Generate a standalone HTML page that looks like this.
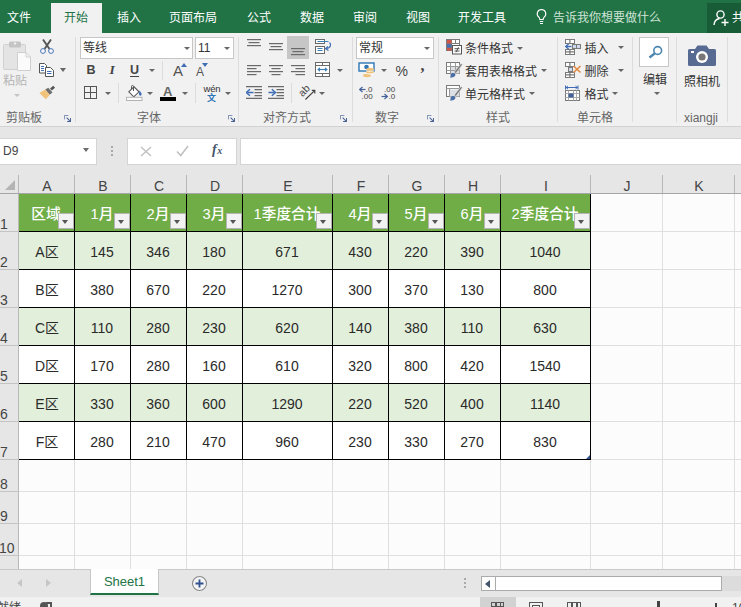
<!DOCTYPE html>
<html lang="zh-CN"><head><meta charset="utf-8"><title>Excel</title>
<style>
html,body{margin:0;padding:0;}
body{width:741px;height:607px;overflow:hidden;position:relative;background:#fff;font-family:"Liberation Sans","Noto Sans CJK SC",sans-serif;font-size:12px;color:#444;}
.abs,.abs *{position:absolute;}
div{box-sizing:border-box;}
#top{left:0;top:0;width:741px;height:33px;background:#217346;}
.tab{top:0;height:32px;line-height:36px;color:#fff;font-size:12px;white-space:nowrap;text-align:center;}
#ribbon{left:0;top:33px;width:741px;height:94px;background:#f1f1f1;border-bottom:1px solid #d2d2d2;}
.gl{top:77px;height:14px;line-height:14px;font-size:12px;color:#666;text-align:center;white-space:nowrap;}

.rt{font-size:12px;color:#333;white-space:nowrap;line-height:14px;}
#fbar{left:0;top:127px;width:741px;height:43px;background:#e6e6e6;}
#grid{left:0;top:170px;width:741px;height:399px;background:#fcfcfc;overflow:hidden;}
.ch{top:0;height:24px;line-height:32px;text-align:center;font-size:14px;color:#444;background:#e6e6e6;}
.rh{left:0;width:16px;text-align:left;font-size:14px;color:#444;background:#e6e6e6;}
.vl{top:24px;width:1px;height:375px;background:#dfdfdf;}
.hl{left:19px;height:1px;width:722px;background:#dfdfdf;}
.c{text-align:center;font-size:14px;color:#2a2a2a;white-space:nowrap;overflow:hidden;}
.hc{background:#70ad47;color:#fff;font-weight:500;font-size:14.670px;}
.band{background:#e2efda;}
.bl{background:#000;}
.fb{width:16px;height:16px;background:#f2f2f2;border:1px solid #b4b4b4;}
.fb i{left:3px;top:6px;width:0;height:0;border-left:3.5px solid transparent;border-right:3.5px solid transparent;border-top:4px solid #555;}
#tabs{left:0;top:569px;width:741px;height:28px;background:#e6e6e6;border-top:1px solid #c8c8c8;}
#status{left:0;top:597px;width:741px;height:10px;background:#f1f1f1;overflow:hidden;}
</style></head><body>
<div id="top" class="abs">
<div style="left:51px;top:3px;width:51px;height:30px;background:#f1f1f1;"></div>
<div class="tab" style="left:-3px;width:44px;color:#fff;">文件</div>
<div class="tab" style="left:54px;width:44px;color:#217346;">开始</div>
<div class="tab" style="left:107px;width:44px;color:#fff;">插入</div>
<div class="tab" style="left:159px;width:68px;color:#fff;">页面布局</div>
<div class="tab" style="left:237px;width:44px;color:#fff;">公式</div>
<div class="tab" style="left:290px;width:44px;color:#fff;">数据</div>
<div class="tab" style="left:343px;width:44px;color:#fff;">审阅</div>
<div class="tab" style="left:396px;width:44px;color:#fff;">视图</div>
<div class="tab" style="left:448px;width:68px;color:#fff;">开发工具</div>
<svg style="left:535px;top:8px;" width="13" height="18" viewBox="0 0 13 18"><path d="M6.5 1.5a4.3 4.3 0 0 0-2.6 7.7c.6.6.9 1.300.9 2.300h3.400c0-1 .3-1.700.9-2.300A4.300 4.300 0 0 0 6.500 1.500z" fill="none" stroke="#fff" stroke-width="1.100"/><path d="M4.800 13.500h3.400M5 15.500h3" stroke="#fff" stroke-width="1.100" fill="none"/></svg>
<div class="tab" style="left:553px;width:108px;color:#cfe3d6;text-align:left;">告诉我你想要做什么</div>
<div style="left:707px;top:3px;width:34px;height:30px;background:#185c37;"></div>
<svg style="left:712px;top:9px;" width="18" height="18" viewBox="0 0 18 18"><circle cx="8.500" cy="5.500" r="3.600" fill="none" stroke="#fff" stroke-width="1.400"/><path d="M2 16c.3-3.500 2.300-6 5.500-6.500" fill="none" stroke="#fff" stroke-width="1.400"/><path d="M13 10v7M9.500 13.500h7" stroke="#fff" stroke-width="1.400"/></svg>
<div class="tab" style="left:732px;width:24px;text-align:left;font-size:12.5px;">共享</div>
</div>
<div id="ribbon" class="abs"><svg style="left:3px;top:8px;" width="29" height="31" viewBox="0 0 29 31"><rect x="0.500" y="3.500" width="22" height="25" rx="1" fill="#e4e4e4" stroke="#d0d0d0"/><rect x="6" y="0.500" width="12" height="6" rx="1.500" fill="#c4c4c4"/><circle cx="12" cy="2.500" r="1.200" fill="#efefef"/><path d="M14.500 11.500h8.500l4.500 4.500v13.500h-13z" fill="#fbfbfb" stroke="#cfcfcf"/><path d="M23 11.500v4.500h4.500" fill="none" stroke="#cfcfcf"/></svg>
<div class="rt" style="left:3px;top:40.5px;color:#b4b4b4;font-size:12px;">粘贴</div>
<div style="left:13.5px;top:60.75px;width:0;height:0;border-left:3px solid transparent;border-right:3px solid transparent;border-top:3.5px solid #c4c4c4;"></div>
<svg style="left:40px;top:6px;" width="14" height="15" viewBox="0 0 14 15"><path d="M3 0.500L9.500 10M11 0.500L4.500 10" stroke="#555" stroke-width="1.900" fill="none"/><circle cx="3" cy="12" r="2.400" fill="#f8f8f8" stroke="#4a74b8" stroke-width="1"/><circle cx="11" cy="12" r="2.400" fill="#f8f8f8" stroke="#4a74b8" stroke-width="1"/></svg>
<svg style="left:39px;top:30px;" width="15" height="14" viewBox="0 0 15 14"><path d="M0.500 0.500h5l2 2v7.500h-7z" fill="#fff" stroke="#555"/><path d="M6.500 4.500h5l3 3v6h-8z" fill="#fff" stroke="#555"/><path d="M2 3.500h3M2 5.500h3M2 7.500h3M8 8.500h4.500M8 10.500h4.500" stroke="#3e6db5" stroke-width="1"/></svg>
<div style="left:60.0px;top:35.0px;width:0;height:0;border-left:3.5px solid transparent;border-right:3.5px solid transparent;border-top:4px solid #666;"></div>
<svg style="left:39px;top:52px;" width="17" height="15" viewBox="0 0 17 15"><path d="M11 3.500L14.300 0.800 16 2.800 12.800 5.500z" fill="#555"/><path d="M6.200 4.500L9.300 2.700 13.500 7.500 10.700 9.800z" fill="#6e6e6e"/><path d="M0.400 8.100L6.200 4.400 10.700 9.900 6.800 14.300z" fill="#f0c27a"/></svg>
<div class="gl" style="left:-1.0px;width:50px;top:77.5px;">剪贴板</div>
<svg style="left:64px;top:82px;" width="7" height="7" viewBox="0 0 8 8"><path d="M0.500 5V0.500H5" fill="none" stroke="#6a7fa8" stroke-width="1"/><path d="M3 3l4 4M7.500 3.500V7.500H3.500" fill="none" stroke="#4a6496" stroke-width="1.200"/></svg>
<div style="left:75px;top:4px;width:1px;height:85px;background:#dcdcdc;"></div>
<div style="left:80px;top:4px;width:113px;height:22px;background:#fff;border:1px solid #c6c6c6;"></div>
<div class="rt" style="left:83px;top:8px;color:#333;font-size:12px;">等线</div>
<div style="left:183.5px;top:13.75px;width:0;height:0;border-left:3px solid transparent;border-right:3px solid transparent;border-top:3.5px solid #666;"></div>
<div style="left:195px;top:4px;width:39px;height:22px;background:#fff;border:1px solid #c6c6c6;"></div>
<div class="rt" style="left:198px;top:8px;color:#333;font-size:12px;">11</div>
<div style="left:223.5px;top:13.75px;width:0;height:0;border-left:3px solid transparent;border-right:3px solid transparent;border-top:3.5px solid #666;"></div>
<div class="rt" style="left:86.5px;top:30px;color:#444;font-size:13px;font-weight:bold;font-size:12.500px;">B</div>
<div class="rt" style="left:109.5px;top:30px;color:#444;font-size:13px;font-family:'Liberation Serif',serif;font-weight:bold;font-style:italic;font-size:13.500px;">I</div>
<div class="rt" style="left:130px;top:30px;color:#444;font-size:13px;font-weight:bold;font-size:12.500px;">U</div>
<div style="left:130px;top:43px;width:9px;height:1px;background:#444;"></div>
<div style="left:148.5px;top:35.75px;width:0;height:0;border-left:3px solid transparent;border-right:3px solid transparent;border-top:3.5px solid #666;"></div>
<div style="left:162px;top:28px;width:1px;height:19px;background:#dcdcdc;"></div>
<div class="rt" style="left:173px;top:31px;color:#555;font-size:15px;">A</div>
<svg style="left:181px;top:30px;" width="6" height="4" viewBox="0 0 6 4"><path d="M3 0L6 4H0z" fill="#3e6db5"/></svg>
<div class="rt" style="left:196px;top:32px;color:#555;font-size:12px;">A</div>
<svg style="left:202px;top:30px;" width="6" height="4" viewBox="0 0 6 4"><path d="M0 0h6L3 4z" fill="#3e6db5"/></svg>
<svg style="left:84px;top:53px;" width="13" height="13" viewBox="0 0 13 13"><rect x="0.500" y="0.500" width="12" height="12" fill="none" stroke="#555"/><path d="M6.500 0.500v12M0.500 6.500h12" stroke="#555" fill="none"/></svg>
<div style="left:104.5px;top:58.75px;width:0;height:0;border-left:3px solid transparent;border-right:3px solid transparent;border-top:3.5px solid #666;"></div>
<div style="left:118px;top:50px;width:1px;height:20px;background:#dcdcdc;"></div>
<svg style="left:126px;top:52px;" width="17" height="16" viewBox="0 0 17 16"><path d="M2.800 6.800L8 1.800l5 5-5.200 5z" fill="#fff" stroke="#555" stroke-width="1.100"/><path d="M7.500 6V1.500a1 1 0 0 0-2 0V4" fill="none" stroke="#555" stroke-width="1"/><path d="M13.300 5.500c1.800 1.800 3 3.600 2 4.800-.8.900-2.300.400-2.300-1 0-1.200.500-2.400.300-3.800z" fill="#3e6db5"/><rect x="0.500" y="12.300" width="15.500" height="3.200" fill="#fafafa" stroke="#b4b4b4"/></svg>
<div style="left:147px;top:58.75px;width:0;height:0;border-left:3px solid transparent;border-right:3px solid transparent;border-top:3.5px solid #666;"></div>
<div class="rt" style="left:163px;top:51.5px;color:#666;font-size:13px;font-weight:bold;font-size:13px;">A</div>
<div style="left:160px;top:64px;width:16px;height:4px;background:#000;"></div>
<div style="left:181.5px;top:58.75px;width:0;height:0;border-left:3px solid transparent;border-right:3px solid transparent;border-top:3.5px solid #666;"></div>
<div style="left:195px;top:50px;width:1px;height:20px;background:#dcdcdc;"></div>
<div class="rt" style="left:203.5px;top:49px;color:#333;font-size:9px;font-size:9.500px;letter-spacing:-0.200px;">wén</div>
<div class="rt" style="left:207px;top:58px;color:#2e75b6;font-size:9px;font-size:9px;font-weight:bold;">文</div>
<div style="left:224.5px;top:58.75px;width:0;height:0;border-left:3px solid transparent;border-right:3px solid transparent;border-top:3.5px solid #666;"></div>
<div class="gl" style="left:124.0px;width:50px;top:77.5px;">字体</div>
<svg style="left:228px;top:82px;" width="7" height="7" viewBox="0 0 8 8"><path d="M0.500 5V0.500H5" fill="none" stroke="#6a7fa8" stroke-width="1"/><path d="M3 3l4 4M7.500 3.500V7.500H3.500" fill="none" stroke="#4a6496" stroke-width="1.200"/></svg>
<div style="left:238px;top:4px;width:1px;height:85px;background:#dcdcdc;"></div>
<svg style="left:247px;top:6px;" width="14" height="8" viewBox="0 0 14 8"><rect x="0" y="0" width="14" height="1.200" fill="#6a6a6a"/><rect x="1.5" y="3" width="11.0" height="1.200" fill="#6a6a6a"/><rect x="0" y="6" width="14" height="1.200" fill="#6a6a6a"/></svg>
<svg style="left:269px;top:10px;" width="14" height="8" viewBox="0 0 14 8"><rect x="0" y="0" width="14" height="1.200" fill="#6a6a6a"/><rect x="1.5" y="3" width="11.0" height="1.200" fill="#6a6a6a"/><rect x="0" y="6" width="14" height="1.200" fill="#6a6a6a"/></svg>
<div style="left:287px;top:3px;width:22px;height:23px;background:#c6c6c6;"></div>
<svg style="left:291px;top:15px;" width="14" height="8" viewBox="0 0 14 8"><rect x="0" y="0" width="14" height="1.200" fill="#6a6a6a"/><rect x="1.5" y="3" width="11.0" height="1.200" fill="#6a6a6a"/><rect x="0" y="6" width="14" height="1.200" fill="#6a6a6a"/></svg>
<svg style="left:315px;top:6px;" width="17" height="15" viewBox="0 0 17 15"><rect x="0.500" y="0.500" width="9" height="4" fill="#fff" stroke="#6a6a6a"/><rect x="0.500" y="7.500" width="9" height="7" fill="#fff" stroke="#6a6a6a"/><path d="M2.500 2.500h11" stroke="#3e7fb5" stroke-width="1"/><path d="M2.500 9.500h5M2.500 11.500h5" stroke="#3e7fb5" stroke-width="1"/><path d="M14.500 3.500c1.800 1.500 1.500 5.500-3 6" fill="none" stroke="#3e6db5" stroke-width="1.200"/><path d="M13 7.500L10.500 9.700 13.500 11.500" fill="none" stroke="#3e6db5" stroke-width="1.200"/></svg>
<svg style="left:247px;top:32px;" width="14" height="11" viewBox="0 0 14 11"><rect x="0" y="0" width="14" height="1.200" fill="#6a6a6a"/><rect x="0" y="3" width="9.5" height="1.200" fill="#6a6a6a"/><rect x="0" y="6" width="14" height="1.200" fill="#6a6a6a"/><rect x="0" y="9" width="9.5" height="1.200" fill="#6a6a6a"/></svg>
<svg style="left:269px;top:32px;" width="14" height="11" viewBox="0 0 14 11"><rect x="0" y="0" width="14" height="1.200" fill="#6a6a6a"/><rect x="2.5" y="3" width="9.0" height="1.200" fill="#6a6a6a"/><rect x="0" y="6" width="14" height="1.200" fill="#6a6a6a"/><rect x="2.5" y="9" width="9.0" height="1.200" fill="#6a6a6a"/></svg>
<svg style="left:291px;top:32px;" width="14" height="11" viewBox="0 0 14 11"><rect x="0" y="0" width="14" height="1.200" fill="#6a6a6a"/><rect x="4.5" y="3" width="9.5" height="1.200" fill="#6a6a6a"/><rect x="0" y="6" width="14" height="1.200" fill="#6a6a6a"/><rect x="4.5" y="9" width="9.5" height="1.200" fill="#6a6a6a"/></svg>
<svg style="left:315px;top:29px;" width="15" height="15" viewBox="0 0 15 15"><rect x="0.500" y="0.500" width="14" height="14" fill="#fff" stroke="#6a6a6a"/><path d="M0.500 3.500h14M0.500 11.500h14M7.500 0.500v3M7.500 11.500v3" stroke="#6a6a6a" fill="none"/><path d="M3 7.500h9" stroke="#3e7fb5" stroke-width="1.200"/><path d="M5 5.300L2.200 7.500 5 9.700zM10 5.300l2.800 2.200L10 9.700z" fill="#3e7fb5"/></svg>
<div style="left:336.5px;top:35.75px;width:0;height:0;border-left:3px solid transparent;border-right:3px solid transparent;border-top:3.5px solid #666;"></div>
<svg style="left:246px;top:53px;" width="16" height="13" viewBox="0 0 16 13"><path d="M0 0.600h16M8.500 3.600h7.500M8.500 6.600h7.500M8.500 9.600h7.500M0 12.400h16" stroke="#6a6a6a" stroke-width="1.200"/><path d="M7.500 6.500h-6" stroke="#3e6db5" stroke-width="1.500"/><path d="M4 3.300L0.300 6.500 4 9.700" fill="none" stroke="#3e6db5" stroke-width="1.500"/></svg>
<svg style="left:268px;top:53px;" width="16" height="13" viewBox="0 0 16 13"><path d="M0 0.600h16M8.500 3.600h7.500M8.500 6.600h7.500M8.500 9.600h7.500M0 12.400h16" stroke="#6a6a6a" stroke-width="1.200"/><path d="M0.500 6.500h6" stroke="#3e6db5" stroke-width="1.500"/><path d="M3.800 3.300L7.500 6.500 3.800 9.700" fill="none" stroke="#3e6db5" stroke-width="1.500"/></svg>
<div style="left:291px;top:50px;width:1px;height:20px;background:#dcdcdc;"></div>
<svg style="left:298px;top:51px;" width="18" height="17" viewBox="0 0 18 17"><text x="0" y="0" font-size="10.500" fill="#4a4a4a" font-family="Liberation Sans, sans-serif" transform="translate(4.400 13.200) rotate(-45)">ab</text><path d="M7.400 15.500L16.600 6.600" stroke="#444" stroke-width="1.200"/><path d="M13.800 6.400h3v3" fill="none" stroke="#444" stroke-width="1.200"/></svg>
<div style="left:318.5px;top:58.75px;width:0;height:0;border-left:3px solid transparent;border-right:3px solid transparent;border-top:3.5px solid #666;"></div>
<div class="gl" style="left:257.0px;width:60px;top:77.5px;">对齐方式</div>
<svg style="left:340px;top:82px;" width="7" height="7" viewBox="0 0 8 8"><path d="M0.500 5V0.500H5" fill="none" stroke="#6a7fa8" stroke-width="1"/><path d="M3 3l4 4M7.500 3.500V7.500H3.500" fill="none" stroke="#4a6496" stroke-width="1.200"/></svg>
<div style="left:352px;top:4px;width:1px;height:85px;background:#dcdcdc;"></div>
<div style="left:356px;top:4px;width:78px;height:22px;background:#fff;border:1px solid #c6c6c6;"></div>
<div class="rt" style="left:359px;top:8px;color:#333;font-size:12px;">常规</div>
<div style="left:423.5px;top:13.75px;width:0;height:0;border-left:3px solid transparent;border-right:3px solid transparent;border-top:3.5px solid #666;"></div>
<svg style="left:358px;top:29px;" width="18" height="16" viewBox="0 0 18 16"><rect x="1" y="1" width="15" height="8" fill="#fff" stroke="#2e75b6" stroke-width="1.400"/><circle cx="8.500" cy="5" r="2.300" fill="#2e75b6"/><ellipse cx="12" cy="7.300" rx="4" ry="1.600" fill="#f0c27a"/><ellipse cx="12" cy="10" rx="4" ry="1.600" fill="#f0c27a"/><ellipse cx="9" cy="13.500" rx="4" ry="1.700" fill="#f0c27a"/><path d="M8 8.600c1.500 1 6 1 8 0M8 11.300c1.500 1 6 1 8 0" stroke="#fff" stroke-width="0.700" fill="none"/></svg>
<div style="left:380.5px;top:35.75px;width:0;height:0;border-left:3px solid transparent;border-right:3px solid transparent;border-top:3.5px solid #666;"></div>
<div class="rt" style="left:395.5px;top:30.5px;color:#444;font-size:14px;font-size:14px;">%</div>
<div class="rt" style="left:420.5px;top:26px;color:#444;font-size:17px;font-weight:bold;font-size:16px;font-family:'Liberation Serif',serif;">,</div>
<svg style="left:359px;top:53px;" width="16" height="14" viewBox="0 0 16 14"><text x="6.800" y="6" font-size="8" fill="#444" font-family="Liberation Sans, sans-serif">.0</text><text x="2.500" y="13.300" font-size="8" fill="#444" font-family="Liberation Sans, sans-serif">.00</text><path d="M6.500 3.500h-5.500" stroke="#44619a" stroke-width="1.200"/><path d="M3.500 1L0.600 3.500 3.500 6" fill="none" stroke="#44619a" stroke-width="1.200"/></svg>
<svg style="left:381px;top:53px;" width="16" height="14" viewBox="0 0 16 14"><text x="3" y="6" font-size="8" fill="#444" font-family="Liberation Sans, sans-serif">.00</text><text x="7.500" y="13.300" font-size="8" fill="#444" font-family="Liberation Sans, sans-serif">.0</text><path d="M0.500 10.500h5.500" stroke="#44619a" stroke-width="1.200"/><path d="M3.500 8L6.400 10.500 3.500 13" fill="none" stroke="#44619a" stroke-width="1.200"/></svg>
<div class="gl" style="left:362.0px;width:50px;top:77.5px;">数字</div>
<svg style="left:427px;top:82px;" width="7" height="7" viewBox="0 0 8 8"><path d="M0.500 5V0.500H5" fill="none" stroke="#6a7fa8" stroke-width="1"/><path d="M3 3l4 4M7.500 3.500V7.500H3.500" fill="none" stroke="#4a6496" stroke-width="1.200"/></svg>
<div style="left:438px;top:4px;width:1px;height:85px;background:#dcdcdc;"></div>
<svg style="left:446px;top:6px;" width="17" height="16" viewBox="0 0 17 16"><rect x="0.500" y="0.500" width="13" height="11" fill="#fff" stroke="#7a7a7a"/><path d="M5.500 0.500v11M9.500 0.500v4M0.500 4.500h13M0.500 8.500h6" stroke="#7a7a7a" fill="none"/><rect x="1" y="1" width="4.500" height="3.500" fill="#d0544a"/><rect x="1" y="5" width="4.500" height="3.500" fill="#4a6fb0"/><rect x="1" y="9" width="4.500" height="2.500" fill="#d0544a"/><rect x="6.500" y="6.500" width="9" height="8.500" fill="#fff" stroke="#555"/><path d="M8.500 9.700h5M8.500 12h5M12.500 8.300l-2.500 5" stroke="#444" stroke-width="0.900" fill="none"/></svg>
<div class="rt" style="left:465px;top:9px;color:#333;font-size:12px;">条件格式</div>
<div style="left:516.5px;top:13.75px;width:0;height:0;border-left:3px solid transparent;border-right:3px solid transparent;border-top:3.5px solid #666;"></div>
<svg style="left:446px;top:29px;" width="17" height="16" viewBox="0 0 17 16"><rect x="0.500" y="0.500" width="13" height="11" fill="#fff" stroke="#7a7a7a"/><rect x="4.500" y="4.500" width="9" height="7" fill="#dcdfe4"/><path d="M0.500 4.500h13M0.500 8.500h13M4.500 0.500v11M9.500 0.500v11" stroke="#999" fill="none"/><path d="M16.500 2.500L10.500 10.500 8 12l.800-2.800L15 1.500z" fill="#777" stroke="#f1f1f1" stroke-width="0.600"/><path d="M4.500 12.500c1.300-2 4-2 4.800-.3.700 1.800-1.800 3.600-5.500 3.300 1-1 .900-2 .700-3z" fill="#4a6fa5"/></svg>
<div class="rt" style="left:465px;top:32px;color:#333;font-size:12px;">套用表格格式</div>
<div style="left:540.5px;top:35.75px;width:0;height:0;border-left:3px solid transparent;border-right:3px solid transparent;border-top:3.5px solid #666;"></div>
<svg style="left:446px;top:52px;" width="17" height="16" viewBox="0 0 17 16"><rect x="0.500" y="0.500" width="13" height="11" fill="#fff" stroke="#7a7a7a"/><rect x="3.500" y="4.500" width="10" height="7" fill="#dcdfe4"/><path d="M0.500 3.500h13M3.500 3.500v8" stroke="#999" fill="none"/><path d="M16.500 2.500L10.500 10.500 8 12l.800-2.800L15 1.500z" fill="#777" stroke="#f1f1f1" stroke-width="0.600"/><path d="M4.500 12.500c1.300-2 4-2 4.800-.3.700 1.800-1.800 3.600-5.500 3.300 1-1 .900-2 .700-3z" fill="#4a6fa5"/></svg>
<div class="rt" style="left:465px;top:55px;color:#333;font-size:12px;">单元格样式</div>
<div style="left:528.5px;top:58.75px;width:0;height:0;border-left:3px solid transparent;border-right:3px solid transparent;border-top:3.5px solid #666;"></div>
<div class="gl" style="left:473.0px;width:50px;top:77.5px;">样式</div>
<div style="left:557px;top:4px;width:1px;height:85px;background:#dcdcdc;"></div>
<svg style="left:565px;top:6px;" width="17" height="16" viewBox="0 0 17 16"><rect x="0.5" y="0.5" width="4.5" height="4" fill="#fff" stroke="#7a7a7a"/><rect x="5" y="0.5" width="4.5" height="4" fill="#fff" stroke="#7a7a7a"/><rect x="7.5" y="5.5" width="4" height="4" fill="#cfd8ea" stroke="#7a7a7a"/><rect x="11.5" y="5.5" width="4" height="4" fill="#cfd8ea" stroke="#7a7a7a"/><rect x="0.5" y="10.5" width="4.5" height="2.5" fill="#fff" stroke="#7a7a7a"/><rect x="5" y="10.5" width="4.5" height="2.5" fill="#fff" stroke="#7a7a7a"/><rect x="0.5" y="13" width="4.5" height="2.5" fill="#fff" stroke="#7a7a7a"/><rect x="5" y="13" width="4.5" height="2.5" fill="#fff" stroke="#7a7a7a"/><path d="M6.500 7.500H1" stroke="#3e6db5" stroke-width="1.400"/><path d="M3.600 5L0.700 7.500 3.600 10" fill="none" stroke="#3e6db5" stroke-width="1.400"/></svg>
<div class="rt" style="left:584.5px;top:9px;color:#333;font-size:12px;">插入</div>
<div style="left:617.5px;top:12.75px;width:0;height:0;border-left:3px solid transparent;border-right:3px solid transparent;border-top:3.5px solid #666;"></div>
<svg style="left:565px;top:29px;" width="17" height="16" viewBox="0 0 17 16"><rect x="0.5" y="0.5" width="4.5" height="4" fill="#fff" stroke="#7a7a7a"/><rect x="5" y="0.5" width="4.5" height="4" fill="#fff" stroke="#7a7a7a"/><rect x="3.5" y="5.5" width="4" height="4" fill="#cfd8ea" stroke="#7a7a7a"/><rect x="0.5" y="10.5" width="4.5" height="2.5" fill="#fff" stroke="#7a7a7a"/><rect x="5" y="10.5" width="4.5" height="2.5" fill="#fff" stroke="#7a7a7a"/><rect x="0.5" y="13" width="4.5" height="2.5" fill="#fff" stroke="#7a7a7a"/><rect x="5" y="13" width="4.5" height="2.5" fill="#fff" stroke="#7a7a7a"/><path d="M8.500 4l7 6.500M15.500 4l-7 6.500" stroke="#e0883e" stroke-width="1.600"/></svg>
<div class="rt" style="left:584.5px;top:32px;color:#333;font-size:12px;">删除</div>
<div style="left:617.5px;top:35.75px;width:0;height:0;border-left:3px solid transparent;border-right:3px solid transparent;border-top:3.5px solid #666;"></div>
<svg style="left:565px;top:52px;" width="16" height="16" viewBox="0 0 16 16"><path d="M1 2.500h11.500" stroke="#3e6db5" stroke-width="1"/><path d="M0.500 0.500v4M13 0.500v4" stroke="#3e6db5"/><path d="M3 1L1 2.500 3 4M10.500 1l2 1.500-2 1.500" fill="none" stroke="#3e6db5" stroke-width="0.900"/><rect x="0.500" y="5.500" width="14" height="10" fill="#fff" stroke="#7a7a7a"/><path d="M0.500 8.500h14M0.500 12.500h14M3.500 5.500v10M8.500 5.500v10M11.500 5.500v10" stroke="#aaa" fill="none"/><rect x="3.500" y="8.500" width="5" height="4" fill="#44619a"/></svg>
<div class="rt" style="left:584.5px;top:55px;color:#333;font-size:12px;">格式</div>
<div style="left:611.5px;top:58.75px;width:0;height:0;border-left:3px solid transparent;border-right:3px solid transparent;border-top:3.5px solid #666;"></div>
<div class="gl" style="left:570.0px;width:50px;top:77.5px;">单元格</div>
<div style="left:632px;top:4px;width:1px;height:85px;background:#dcdcdc;"></div>
<div style="left:639px;top:4px;width:30px;height:30px;background:#fff;border:1px solid #c6c6c6;"></div>
<svg style="left:648px;top:12px;" width="15" height="14" viewBox="0 0 15 14"><circle cx="9.700" cy="5.500" r="3.900" fill="none" stroke="#4a86b0" stroke-width="1.600"/><path d="M6.800 8.400L1.500 12.500" stroke="#4a86b0" stroke-width="2.400"/></svg>
<div class="rt" style="left:643px;top:39.5px;color:#333;font-size:12px;">编辑</div>
<div style="left:653.5px;top:59.25px;width:0;height:0;border-left:3px solid transparent;border-right:3px solid transparent;border-top:3.5px solid #666;"></div>
<div style="left:676px;top:4px;width:1px;height:85px;background:#dcdcdc;"></div>
<svg style="left:688px;top:10.5px;" width="28" height="23" viewBox="0 0 28 23"><path d="M1.500 5h5.500l2.500-3.500h9l2.500 3.500h5.500a1.500 1.500 0 0 1 1.500 1.500v14a1.500 1.500 0 0 1-1.500 1.500h-25a1.500 1.500 0 0 1-1.500-1.500v-14a1.500 1.500 0 0 1 1.500-1.500z" fill="#566a92"/><circle cx="14" cy="13" r="6" fill="#fff"/><circle cx="14" cy="13" r="3.600" fill="#777"/><rect x="3" y="7" width="3" height="2" fill="#fff"/></svg>
<div class="rt" style="left:684px;top:41.5px;color:#333;font-size:12px;">照相机</div>
<div class="gl" style="left:671px;width:60px;top:77.5px;">xiangji</div>
<div style="left:727px;top:4px;width:1px;height:85px;background:#dcdcdc;"></div></div>
<div id="fbar" class="abs">
<div style="left:0;top:11px;width:97px;height:27px;background:#fff;border:1px solid #d4d4d4;border-left:none;"></div>
<div style="left:3px;top:17px;font-size:12px;color:#444;line-height:14px;">D9</div>
<div style="left:83px;top:21px;width:0;height:0;border-left:3.500px solid transparent;border-right:3.500px solid transparent;border-top:4px solid #6a6a6a;"></div>
<div style="left:111px;top:19px;width:2px;height:2px;background:#a8a8a8;"></div><div style="left:111px;top:23px;width:2px;height:2px;background:#a8a8a8;"></div><div style="left:111px;top:27px;width:2px;height:2px;background:#a8a8a8;"></div>
<div style="left:127px;top:11px;width:110px;height:27px;background:#fff;border:1px solid #d4d4d4;"></div>
<svg style="left:140px;top:19px;" width="12" height="11" viewBox="0 0 12 11"><path d="M1 1l10 9M11 1L1 10" stroke="#c0c0c0" stroke-width="1.400" fill="none"/></svg>
<svg style="left:176px;top:18px;" width="13" height="12" viewBox="0 0 13 12"><path d="M1 6.500l3.800 4L12 1" stroke="#c0c0c0" stroke-width="1.600" fill="none"/></svg>
<div style="left:212px;top:15px;font-family:'Liberation Serif',serif;font-style:italic;font-size:14px;color:#44546a;line-height:16px;font-weight:bold;letter-spacing:0.500px;">f<span style="position:static;font-size:10px;">x</span></div>
<div style="left:240px;top:11px;width:501px;height:27px;background:#fff;border:1px solid #d4d4d4;border-right:none;"></div>
</div>
<div id="grid" class="abs">
<div style="left:0;top:0;width:741px;height:24px;background:#e6e6e6;"></div>
<div style="left:0;top:0;width:19px;height:399px;background:#e6e6e6;"></div>
<div style="left:5px;top:10px;width:0;height:0;border-left:10px solid transparent;border-bottom:10px solid #b4b4b4;"></div>
<div class="ch" style="left:19px;width:56px;">A</div>
<div style="left:74px;top:5px;width:1px;height:19px;background:#b8b8b8;"></div>
<div class="ch" style="left:75px;width:56px;">B</div>
<div style="left:130px;top:5px;width:1px;height:19px;background:#b8b8b8;"></div>
<div class="ch" style="left:131px;width:56px;">C</div>
<div style="left:186px;top:5px;width:1px;height:19px;background:#b8b8b8;"></div>
<div class="ch" style="left:187px;width:56px;">D</div>
<div style="left:242px;top:5px;width:1px;height:19px;background:#b8b8b8;"></div>
<div class="ch" style="left:243px;width:90px;">E</div>
<div style="left:332px;top:5px;width:1px;height:19px;background:#b8b8b8;"></div>
<div class="ch" style="left:333px;width:56px;">F</div>
<div style="left:388px;top:5px;width:1px;height:19px;background:#b8b8b8;"></div>
<div class="ch" style="left:389px;width:56px;">G</div>
<div style="left:444px;top:5px;width:1px;height:19px;background:#b8b8b8;"></div>
<div class="ch" style="left:445px;width:56px;">H</div>
<div style="left:500px;top:5px;width:1px;height:19px;background:#b8b8b8;"></div>
<div class="ch" style="left:501px;width:90px;">I</div>
<div style="left:590px;top:5px;width:1px;height:19px;background:#b8b8b8;"></div>
<div class="ch" style="left:591px;width:72px;">J</div>
<div style="left:662px;top:5px;width:1px;height:19px;background:#b8b8b8;"></div>
<div class="ch" style="left:663px;width:72px;">K</div>
<div style="left:734px;top:5px;width:1px;height:19px;background:#b8b8b8;"></div>
<div style="left:18px;top:5px;width:1px;height:19px;background:#b8b8b8;"></div>
<div style="left:0;top:23px;width:741px;height:1px;background:#a6a6a6;"></div>
<div style="left:18px;top:24px;width:1px;height:375px;background:#b8b8b8;"></div>
<div class="rh" style="top:46px;height:16px;line-height:16px;left:0px;">1</div>
<div style="left:0;top:61px;width:19px;height:1px;background:#c4c4c4;"></div>
<div class="hl" style="top:61px;"></div>
<div class="rh" style="top:84px;height:16px;line-height:16px;left:0px;">2</div>
<div style="left:0;top:99px;width:19px;height:1px;background:#c4c4c4;"></div>
<div class="hl" style="top:99px;"></div>
<div class="rh" style="top:122px;height:16px;line-height:16px;left:0px;">3</div>
<div style="left:0;top:137px;width:19px;height:1px;background:#c4c4c4;"></div>
<div class="hl" style="top:137px;"></div>
<div class="rh" style="top:160px;height:16px;line-height:16px;left:0px;">4</div>
<div style="left:0;top:175px;width:19px;height:1px;background:#c4c4c4;"></div>
<div class="hl" style="top:175px;"></div>
<div class="rh" style="top:198px;height:16px;line-height:16px;left:0px;">5</div>
<div style="left:0;top:213px;width:19px;height:1px;background:#c4c4c4;"></div>
<div class="hl" style="top:213px;"></div>
<div class="rh" style="top:236px;height:16px;line-height:16px;left:0px;">6</div>
<div style="left:0;top:251px;width:19px;height:1px;background:#c4c4c4;"></div>
<div class="hl" style="top:251px;"></div>
<div class="rh" style="top:274px;height:16px;line-height:16px;left:0px;">7</div>
<div style="left:0;top:289px;width:19px;height:1px;background:#c4c4c4;"></div>
<div class="hl" style="top:289px;"></div>
<div class="rh" style="top:306px;height:16px;line-height:16px;left:0px;">8</div>
<div style="left:0;top:321px;width:19px;height:1px;background:#c4c4c4;"></div>
<div class="hl" style="top:321px;"></div>
<div class="rh" style="top:338px;height:16px;line-height:16px;left:0px;">9</div>
<div style="left:0;top:353px;width:19px;height:1px;background:#c4c4c4;"></div>
<div class="hl" style="top:353px;"></div>
<div class="rh" style="top:370px;height:16px;line-height:16px;left:-1px;">10</div>
<div style="left:0;top:385px;width:19px;height:1px;background:#c4c4c4;"></div>
<div class="hl" style="top:385px;"></div>
<div class="rh" style="top:402px;height:16px;line-height:16px;left:-1px;">11</div>
<div style="left:0;top:417px;width:19px;height:1px;background:#c4c4c4;"></div>
<div class="hl" style="top:417px;"></div>
<div class="vl" style="left:74px;"></div>
<div class="vl" style="left:130px;"></div>
<div class="vl" style="left:186px;"></div>
<div class="vl" style="left:242px;"></div>
<div class="vl" style="left:332px;"></div>
<div class="vl" style="left:388px;"></div>
<div class="vl" style="left:444px;"></div>
<div class="vl" style="left:500px;"></div>
<div class="vl" style="left:590px;"></div>
<div class="vl" style="left:662px;"></div>
<div class="vl" style="left:734px;"></div>
<div class="c hc" style="left:19px;top:24px;width:56px;height:38px;line-height:41px;padding-right:2px;">区域</div>
<div class="fb" style="left:58px;top:43px;"><i></i></div>
<div class="c hc" style="left:75px;top:24px;width:56px;height:38px;line-height:41px;padding-right:2px;">1月</div>
<div class="fb" style="left:114px;top:43px;"><i></i></div>
<div class="c hc" style="left:131px;top:24px;width:56px;height:38px;line-height:41px;padding-right:2px;">2月</div>
<div class="fb" style="left:170px;top:43px;"><i></i></div>
<div class="c hc" style="left:187px;top:24px;width:56px;height:38px;line-height:41px;padding-right:2px;">3月</div>
<div class="fb" style="left:226px;top:43px;"><i></i></div>
<div class="c hc" style="left:243px;top:24px;width:90px;height:38px;line-height:41px;padding-right:2px;">1季度合计</div>
<div class="fb" style="left:316px;top:43px;"><i></i></div>
<div class="c hc" style="left:333px;top:24px;width:56px;height:38px;line-height:41px;padding-right:2px;">4月</div>
<div class="fb" style="left:372px;top:43px;"><i></i></div>
<div class="c hc" style="left:389px;top:24px;width:56px;height:38px;line-height:41px;padding-right:2px;">5月</div>
<div class="fb" style="left:428px;top:43px;"><i></i></div>
<div class="c hc" style="left:445px;top:24px;width:56px;height:38px;line-height:41px;padding-right:2px;">6月</div>
<div class="fb" style="left:484px;top:43px;"><i></i></div>
<div class="c hc" style="left:501px;top:24px;width:90px;height:38px;line-height:41px;padding-right:2px;">2季度合计</div>
<div class="fb" style="left:574px;top:43px;"><i></i></div>
<div class="c band" style="left:19px;top:62px;width:56px;height:38px;line-height:41px;">A区</div>
<div class="c band" style="left:75px;top:62px;width:56px;height:38px;line-height:41px;padding-right:2px;">145</div>
<div class="c band" style="left:131px;top:62px;width:56px;height:38px;line-height:41px;padding-right:2px;">346</div>
<div class="c band" style="left:187px;top:62px;width:56px;height:38px;line-height:41px;padding-right:2px;">180</div>
<div class="c band" style="left:243px;top:62px;width:90px;height:38px;line-height:41px;padding-right:2px;">671</div>
<div class="c band" style="left:333px;top:62px;width:56px;height:38px;line-height:41px;padding-right:2px;">430</div>
<div class="c band" style="left:389px;top:62px;width:56px;height:38px;line-height:41px;padding-right:2px;">220</div>
<div class="c band" style="left:445px;top:62px;width:56px;height:38px;line-height:41px;padding-right:2px;">390</div>
<div class="c band" style="left:501px;top:62px;width:90px;height:38px;line-height:41px;padding-right:2px;">1040</div>
<div class="c" style="left:19px;top:100px;width:56px;height:38px;line-height:41px;background:#fff;">B区</div>
<div class="c" style="left:75px;top:100px;width:56px;height:38px;line-height:41px;padding-right:2px;background:#fff;">380</div>
<div class="c" style="left:131px;top:100px;width:56px;height:38px;line-height:41px;padding-right:2px;background:#fff;">670</div>
<div class="c" style="left:187px;top:100px;width:56px;height:38px;line-height:41px;padding-right:2px;background:#fff;">220</div>
<div class="c" style="left:243px;top:100px;width:90px;height:38px;line-height:41px;padding-right:2px;background:#fff;">1270</div>
<div class="c" style="left:333px;top:100px;width:56px;height:38px;line-height:41px;padding-right:2px;background:#fff;">300</div>
<div class="c" style="left:389px;top:100px;width:56px;height:38px;line-height:41px;padding-right:2px;background:#fff;">370</div>
<div class="c" style="left:445px;top:100px;width:56px;height:38px;line-height:41px;padding-right:2px;background:#fff;">130</div>
<div class="c" style="left:501px;top:100px;width:90px;height:38px;line-height:41px;padding-right:2px;background:#fff;">800</div>
<div class="c band" style="left:19px;top:138px;width:56px;height:38px;line-height:41px;">C区</div>
<div class="c band" style="left:75px;top:138px;width:56px;height:38px;line-height:41px;padding-right:2px;">110</div>
<div class="c band" style="left:131px;top:138px;width:56px;height:38px;line-height:41px;padding-right:2px;">280</div>
<div class="c band" style="left:187px;top:138px;width:56px;height:38px;line-height:41px;padding-right:2px;">230</div>
<div class="c band" style="left:243px;top:138px;width:90px;height:38px;line-height:41px;padding-right:2px;">620</div>
<div class="c band" style="left:333px;top:138px;width:56px;height:38px;line-height:41px;padding-right:2px;">140</div>
<div class="c band" style="left:389px;top:138px;width:56px;height:38px;line-height:41px;padding-right:2px;">380</div>
<div class="c band" style="left:445px;top:138px;width:56px;height:38px;line-height:41px;padding-right:2px;">110</div>
<div class="c band" style="left:501px;top:138px;width:90px;height:38px;line-height:41px;padding-right:2px;">630</div>
<div class="c" style="left:19px;top:176px;width:56px;height:38px;line-height:41px;background:#fff;">D区</div>
<div class="c" style="left:75px;top:176px;width:56px;height:38px;line-height:41px;padding-right:2px;background:#fff;">170</div>
<div class="c" style="left:131px;top:176px;width:56px;height:38px;line-height:41px;padding-right:2px;background:#fff;">280</div>
<div class="c" style="left:187px;top:176px;width:56px;height:38px;line-height:41px;padding-right:2px;background:#fff;">160</div>
<div class="c" style="left:243px;top:176px;width:90px;height:38px;line-height:41px;padding-right:2px;background:#fff;">610</div>
<div class="c" style="left:333px;top:176px;width:56px;height:38px;line-height:41px;padding-right:2px;background:#fff;">320</div>
<div class="c" style="left:389px;top:176px;width:56px;height:38px;line-height:41px;padding-right:2px;background:#fff;">800</div>
<div class="c" style="left:445px;top:176px;width:56px;height:38px;line-height:41px;padding-right:2px;background:#fff;">420</div>
<div class="c" style="left:501px;top:176px;width:90px;height:38px;line-height:41px;padding-right:2px;background:#fff;">1540</div>
<div class="c band" style="left:19px;top:214px;width:56px;height:38px;line-height:41px;">E区</div>
<div class="c band" style="left:75px;top:214px;width:56px;height:38px;line-height:41px;padding-right:2px;">330</div>
<div class="c band" style="left:131px;top:214px;width:56px;height:38px;line-height:41px;padding-right:2px;">360</div>
<div class="c band" style="left:187px;top:214px;width:56px;height:38px;line-height:41px;padding-right:2px;">600</div>
<div class="c band" style="left:243px;top:214px;width:90px;height:38px;line-height:41px;padding-right:2px;">1290</div>
<div class="c band" style="left:333px;top:214px;width:56px;height:38px;line-height:41px;padding-right:2px;">220</div>
<div class="c band" style="left:389px;top:214px;width:56px;height:38px;line-height:41px;padding-right:2px;">520</div>
<div class="c band" style="left:445px;top:214px;width:56px;height:38px;line-height:41px;padding-right:2px;">400</div>
<div class="c band" style="left:501px;top:214px;width:90px;height:38px;line-height:41px;padding-right:2px;">1140</div>
<div class="c" style="left:19px;top:252px;width:56px;height:38px;line-height:41px;background:#fff;">F区</div>
<div class="c" style="left:75px;top:252px;width:56px;height:38px;line-height:41px;padding-right:2px;background:#fff;">280</div>
<div class="c" style="left:131px;top:252px;width:56px;height:38px;line-height:41px;padding-right:2px;background:#fff;">210</div>
<div class="c" style="left:187px;top:252px;width:56px;height:38px;line-height:41px;padding-right:2px;background:#fff;">470</div>
<div class="c" style="left:243px;top:252px;width:90px;height:38px;line-height:41px;padding-right:2px;background:#fff;">960</div>
<div class="c" style="left:333px;top:252px;width:56px;height:38px;line-height:41px;padding-right:2px;background:#fff;">230</div>
<div class="c" style="left:389px;top:252px;width:56px;height:38px;line-height:41px;padding-right:2px;background:#fff;">330</div>
<div class="c" style="left:445px;top:252px;width:56px;height:38px;line-height:41px;padding-right:2px;background:#fff;">270</div>
<div class="c" style="left:501px;top:252px;width:90px;height:38px;line-height:41px;padding-right:2px;background:#fff;">830</div>
<div class="bl" style="left:74px;top:24px;width:1px;height:266px;"></div>
<div class="bl" style="left:130px;top:24px;width:1px;height:266px;"></div>
<div class="bl" style="left:186px;top:24px;width:1px;height:266px;"></div>
<div class="bl" style="left:242px;top:24px;width:1px;height:266px;"></div>
<div class="bl" style="left:332px;top:24px;width:1px;height:266px;"></div>
<div class="bl" style="left:388px;top:24px;width:1px;height:266px;"></div>
<div class="bl" style="left:444px;top:24px;width:1px;height:266px;"></div>
<div class="bl" style="left:500px;top:24px;width:1px;height:266px;"></div>
<div class="bl" style="left:590px;top:24px;width:1px;height:266px;"></div>
<div class="bl" style="left:19px;top:61px;width:572px;height:1px;"></div>
<div class="bl" style="left:19px;top:99px;width:572px;height:1px;"></div>
<div class="bl" style="left:19px;top:137px;width:572px;height:1px;"></div>
<div class="bl" style="left:19px;top:175px;width:572px;height:1px;"></div>
<div class="bl" style="left:19px;top:213px;width:572px;height:1px;"></div>
<div class="bl" style="left:19px;top:251px;width:572px;height:1px;"></div>
<div class="bl" style="left:19px;top:289px;width:572px;height:1px;"></div>
<div style="left:586px;top:285px;width:0;height:0;border-left:4px solid transparent;border-bottom:4px solid #2f5597;"></div>
</div>
<div id="tabs" class="abs">
<div style="left:17px;top:9px;width:0;height:0;border-top:4px solid transparent;border-bottom:4px solid transparent;border-right:5px solid #c6c6c6;"></div>
<div style="left:46px;top:9px;width:0;height:0;border-top:4px solid transparent;border-bottom:4px solid transparent;border-left:5px solid #c6c6c6;"></div>
<div style="left:90px;top:-1px;width:69px;height:26px;background:#fff;border-bottom:2px solid #217346;border-left:1px solid #c8c8c8;border-right:1px solid #c8c8c8;"></div>
<div style="left:90px;top:4px;width:69px;text-align:center;font-size:13px;color:#217346;line-height:16px;">Sheet1</div>
<svg style="left:191px;top:5px;" width="17" height="17" viewBox="0 0 17 17"><circle cx="8.500" cy="8.500" r="7" fill="#f4f4f4" stroke="#8a8a8a" stroke-width="1.100"/><path d="M8.500 4.500v8M4.500 8.500h8" stroke="#2f4f8f" stroke-width="1.800"/></svg>
<div style="left:464px;top:8px;width:2px;height:2px;background:#aaa;"></div><div style="left:464px;top:12px;width:2px;height:2px;background:#aaa;"></div><div style="left:464px;top:16px;width:2px;height:2px;background:#aaa;"></div>
<div style="left:481px;top:6px;width:15px;height:15px;background:#fff;border:1px solid #ababab;"></div>
<div style="left:485px;top:10px;width:0;height:0;border-top:4px solid transparent;border-bottom:4px solid transparent;border-right:5px solid #44546a;"></div>
<div style="left:496px;top:6px;width:226px;height:15px;background:#fff;border:1px solid #ababab;border-left:none;"></div>
<div style="left:722px;top:6px;width:19px;height:15px;background:#dcdcdc;"></div>
</div>
<div id="status" class="abs">
<div style="left:-3px;top:4px;font-size:12px;color:#444;line-height:14px;white-space:nowrap;">就绪</div>
<div style="left:40px;top:5px;width:8px;height:8px;border-radius:4px;background:#555;"></div><div style="left:46px;top:5px;width:6px;height:6px;border-top:2px solid #555;border-right:2px solid #555;"></div>
<div style="left:480px;top:0;width:36px;height:10px;background:#d2d2d2;"></div>
<div style="left:491px;top:5px;width:13px;height:10px;border:1.500px solid #555;"></div><div style="left:491px;top:9px;width:13px;height:1.500px;background:#555;"></div><div style="left:495px;top:5px;width:1.500px;height:8px;background:#555;"></div><div style="left:499.500px;top:5px;width:1.500px;height:8px;background:#555;"></div>
<div style="left:529px;top:5px;width:14px;height:10px;border:1.500px solid #555;"></div><div style="left:532px;top:8px;width:8px;height:6px;border:1.500px solid #555;"></div>
<div style="left:567px;top:5px;width:14px;height:10px;border:1.500px solid #555;"></div><div style="left:571px;top:5px;width:1.500px;height:8px;background:#555;"></div><div style="left:576px;top:5px;width:1.500px;height:8px;background:#555;"></div>
<div style="left:657px;top:4px;width:3px;height:10px;background:#444;"></div>
<div style="left:715px;top:6px;width:2px;height:6px;background:#444;"></div>
<div style="left:732px;top:4px;font-size:12px;color:#444;line-height:14px;white-space:nowrap;">100%</div>
</div>
</body></html>
